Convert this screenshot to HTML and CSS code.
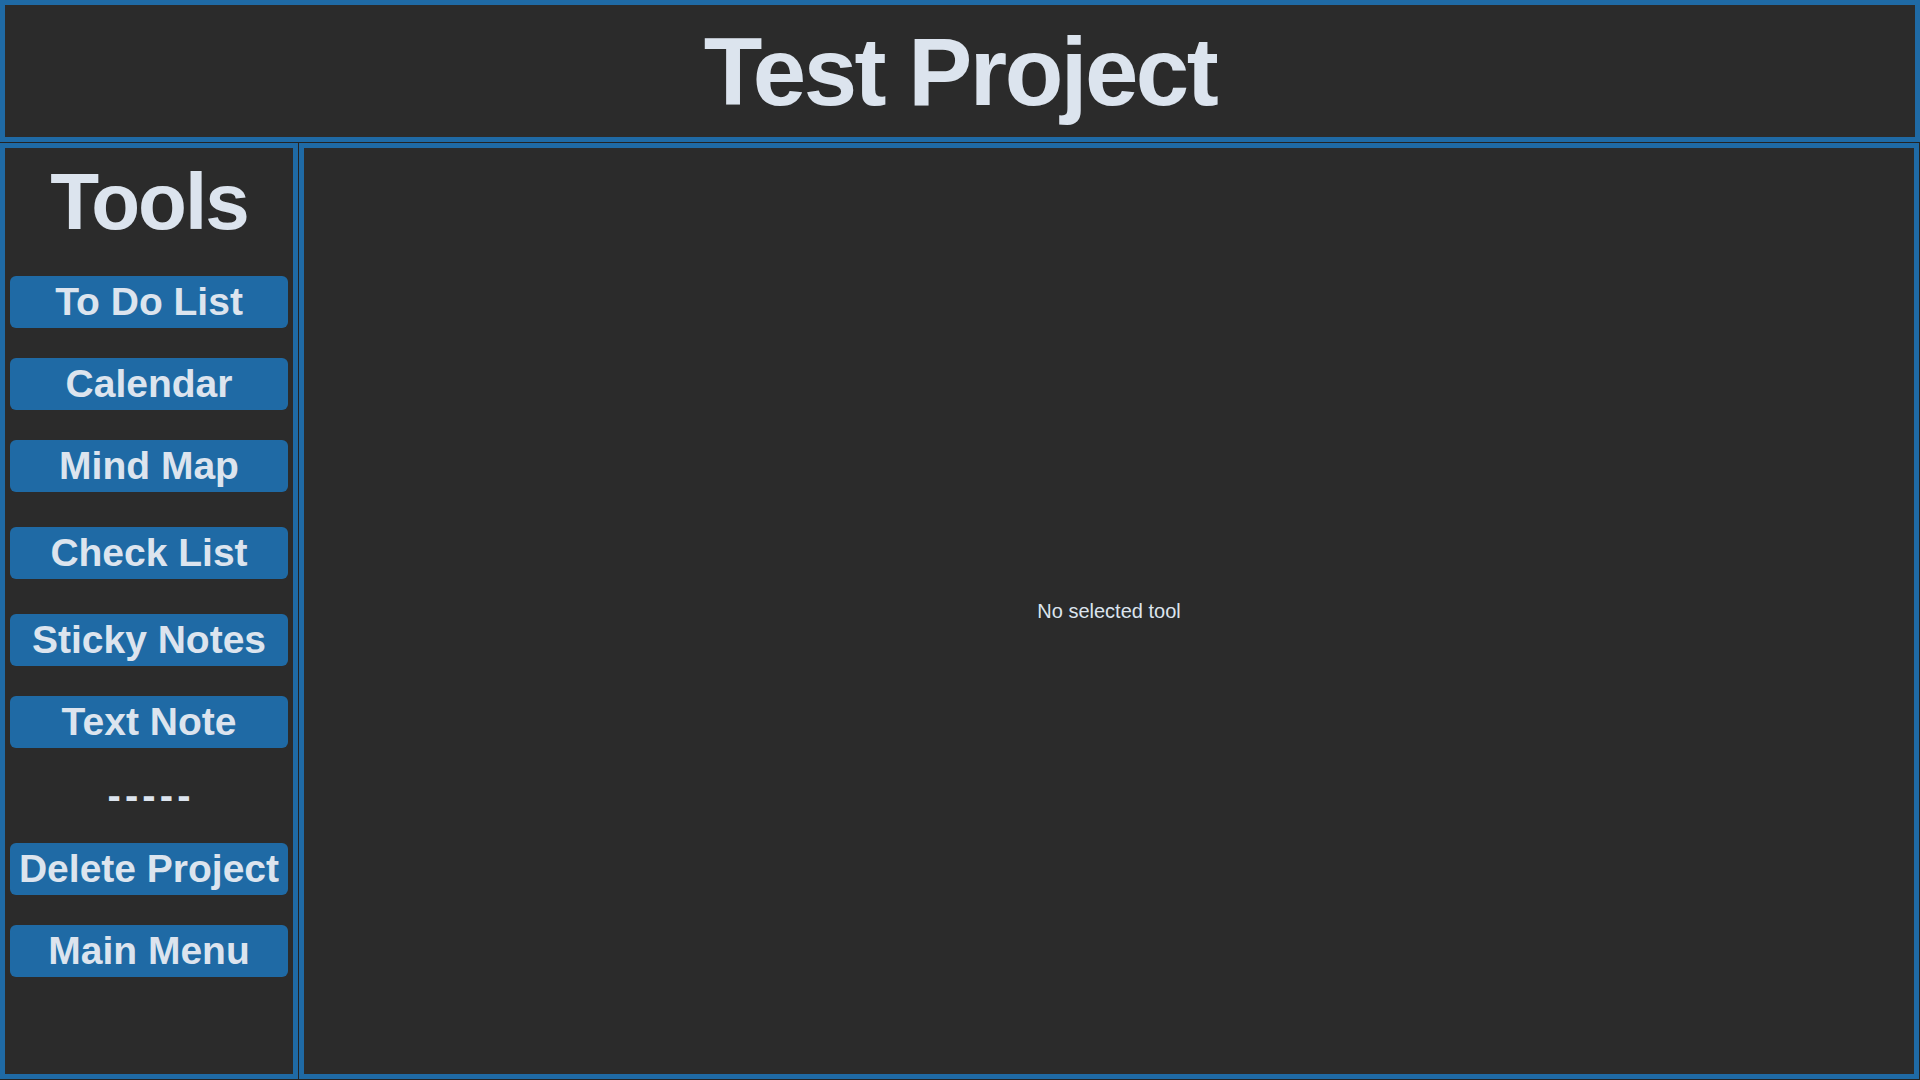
FILE: index.html
```html
<!DOCTYPE html>
<html lang="en">
<head>
<meta charset="utf-8">
<title>Test Project</title>
<link rel="stylesheet" href="styles.css">
</head>
<body>
<header class="header">
  <h1 class="title">Test Project</h1>
</header>
<div class="workspace">
  <aside class="sidebar">
    <h2 class="tools-title">Tools</h2>
    <button class="tool-btn gap-35">To Do List</button>
    <button class="tool-btn gap-30">Calendar</button>
    <button class="tool-btn gap-30">Mind Map</button>
    <button class="tool-btn gap-35">Check List</button>
    <button class="tool-btn gap-35">Sticky Notes</button>
    <button class="tool-btn gap-30">Text Note</button>
    <div class="separator">- - - - -</div>
    <button class="tool-btn gap-22">Delete Project</button>
    <button class="tool-btn gap-30">Main Menu</button>
  </aside>
  <main class="content">
    <p class="empty-msg">No selected tool</p>
  </main>
</div>
</body>
</html>
```

FILE: styles.css
```css
html, body {
  margin: 0;
  padding: 0;
}

body {
  width: 1920px;
  height: 1080px;
  background: #242424;
  font-family: "Liberation Sans", Arial, sans-serif;
  color: #dce4ee;
  overflow: hidden;
}

.header {
  box-sizing: border-box;
  height: 142px;
  width: 1920px;
  border: 5px solid #1f6aa5;
  background: #2b2b2b;
  margin-bottom: 1px;
  display: flex;
  align-items: center;
  justify-content: center;
  padding-top: 2px;
}

.title {
  margin: 0;
  font-size: 96px;
  font-weight: bold;
  letter-spacing: -2.5px;
  line-height: normal;
}

.workspace {
  display: flex;
  gap: 1px;
  width: 1919px;
  height: 936px;
}

.sidebar {
  box-sizing: border-box;
  width: 298px;
  height: 936px;
  border: 5px solid #1f6aa5;
  background: #2b2b2b;
  display: flex;
  flex-direction: column;
  align-items: center;
  padding-top: 15px;
}

.tools-title {
  margin: 0;
  font-size: 80px;
  line-height: 78px;
  font-weight: bold;
  letter-spacing: -2px;
  text-align: center;
}

.tool-btn {
  box-sizing: border-box;
  width: 278px;
  height: 52px;
  flex: none;
  border: none;
  border-radius: 6px;
  background: #1f6aa5;
  color: #dce4ee;
  font-family: "Liberation Sans", Arial, sans-serif;
  font-size: 39px;
  font-weight: bold;
  line-height: 52px;
  padding: 0;
  white-space: nowrap;
  display: flex;
  align-items: center;
  justify-content: center;
  cursor: pointer;
}

.gap-35 { margin-top: 35px; }
.gap-30 { margin-top: 30px; }
.gap-22 { margin-top: 22px; }

.separator {
  margin-top: 21px;
  height: 52px;
  font-size: 40px;
  line-height: 52px;
  font-weight: bold;
  word-spacing: -7px;
  text-align: center;
}

.content {
  box-sizing: border-box;
  width: 1620px;
  height: 936px;
  border: 5px solid #1f6aa5;
  background: #2b2b2b;
  display: flex;
  align-items: center;
  justify-content: center;
}

.empty-msg {
  margin: 0;
  font-size: 20px;
  line-height: 24px;
}
```
